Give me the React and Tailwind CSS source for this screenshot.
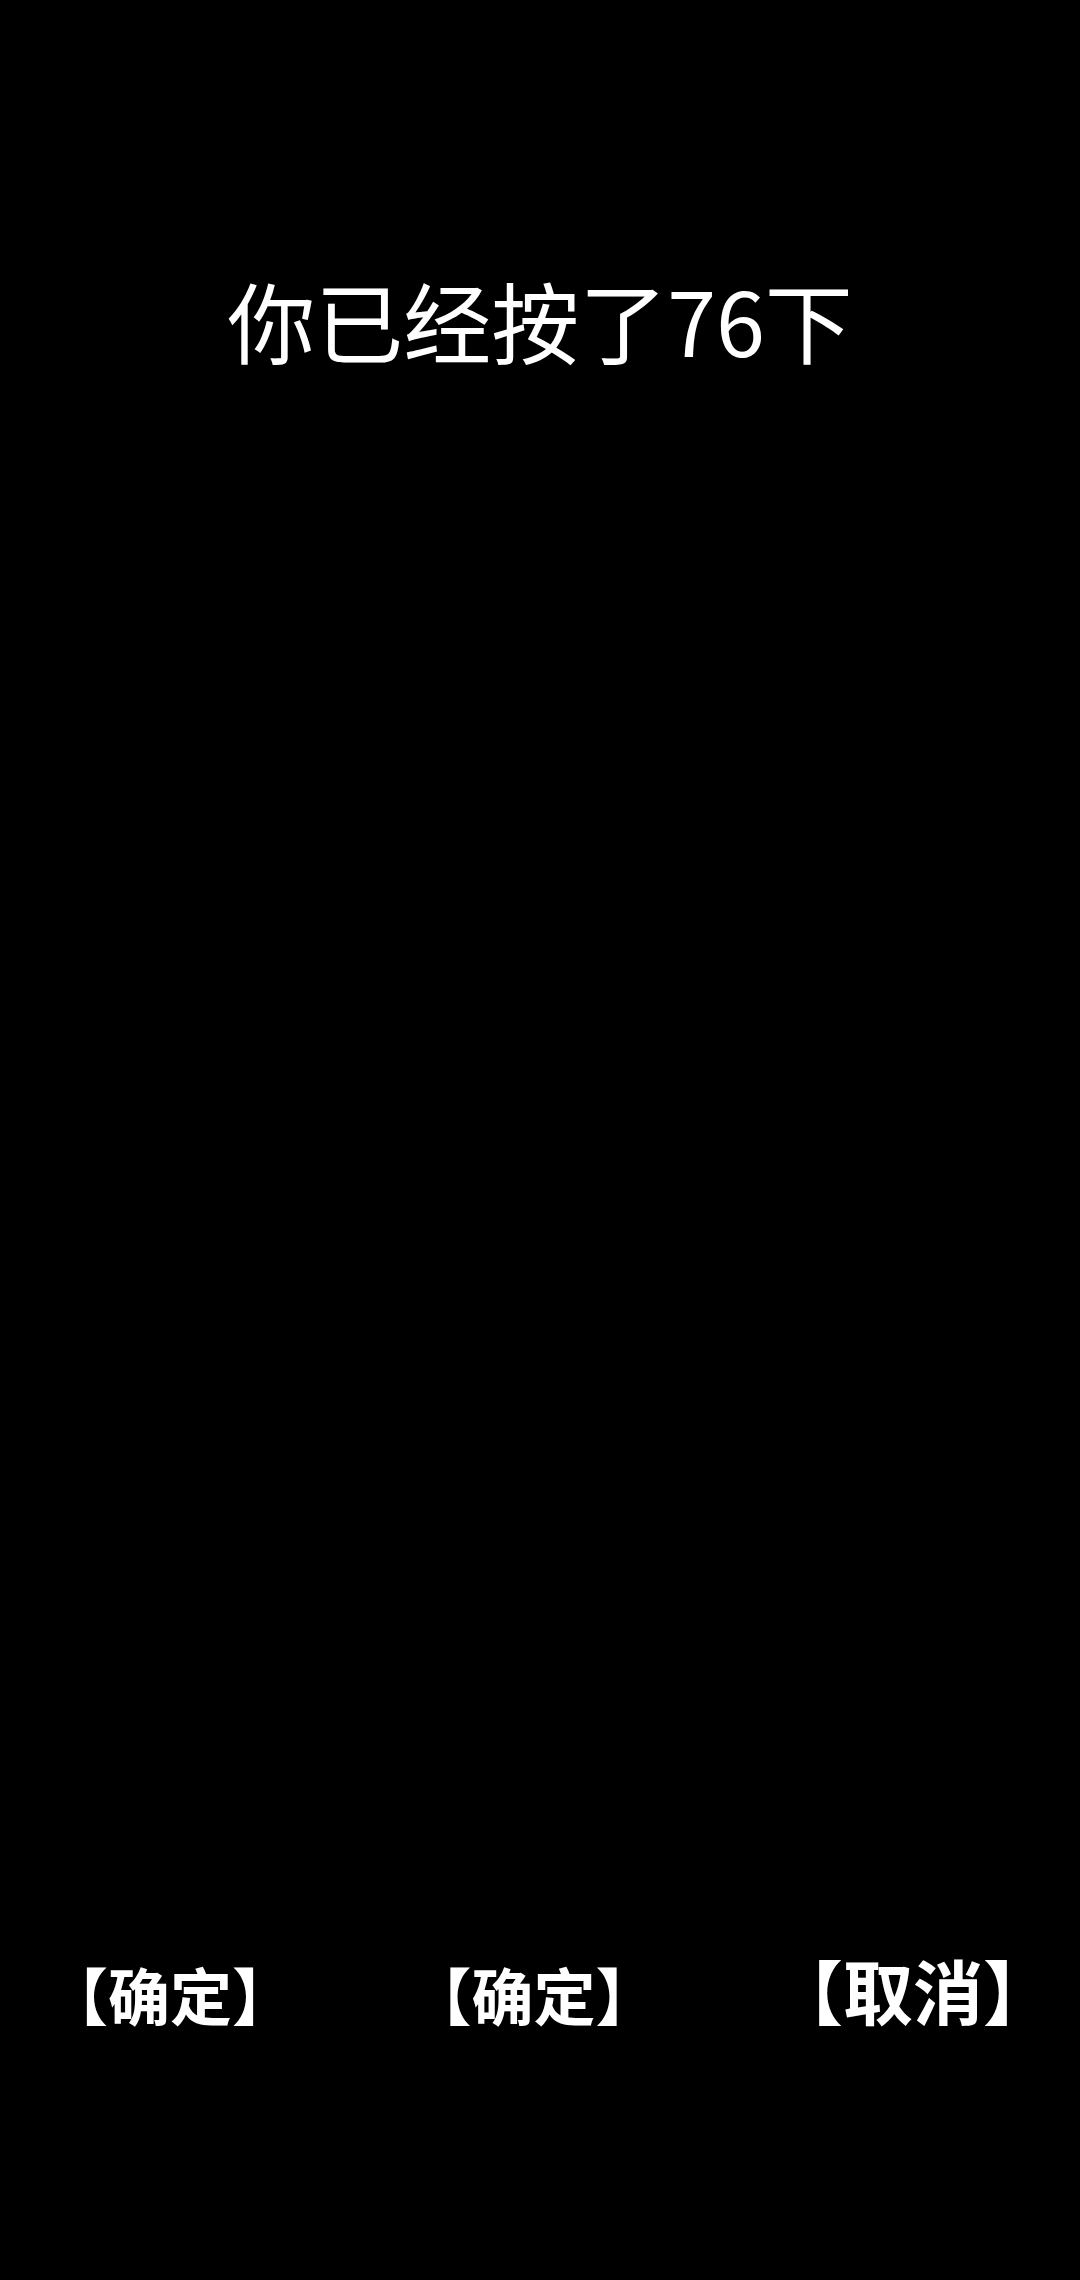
export default function App() {
  return (
    <main
      className="flex h-[2280px] w-[1080px] flex-col bg-black text-white"
      style={{ fontFamily: '"Noto Sans CJK SC", "Noto Sans", sans-serif' }}
    >
      <h1 className="pt-[275px] text-center text-[88px] font-normal leading-none">你已经按了76下</h1>

      <div className="mt-auto mb-[255px] flex items-end justify-between pl-[46px] pr-[27px]">
        <button className="text-[62px] font-bold leading-none">【确定】</button>
        <button className="text-[62px] font-bold leading-none">【确定】</button>
        <button className="text-[70px] font-bold leading-none">【取消】</button>
      </div>
    </main>
  );
}
